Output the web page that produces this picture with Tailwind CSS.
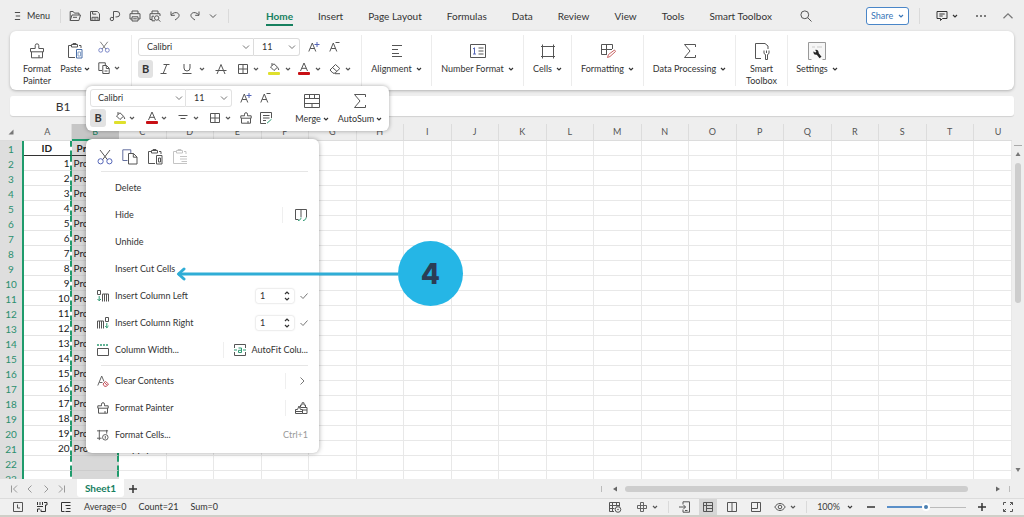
<!DOCTYPE html>
<html lang="en">
<head>
<meta charset="utf-8">
<title>Spreadsheet</title>
<script src="https://cdn.jsdelivr.net/npm/@tailwindcss/browser@4"></script>
</head>
<body class="relative flex h-screen flex-col overflow-hidden bg-[#eeeeee] font-[Lato,'Noto_Sans',sans-serif] text-[9px] leading-3 text-[#333]">

<svg class="hidden" aria-hidden="true">
  <defs>
    <symbol id="chev" viewBox="0 0 8 8"><path d="M1 2.5 4 5.5 7 2.5" fill="none" stroke="currentColor"/></symbol>
    <symbol id="chev-s" viewBox="0 0 6 6"><path d="M1 2 3 4 5 2" fill="none" stroke="currentColor" stroke-width="1.2"/></symbol>
    <symbol id="menu" viewBox="0 0 8 12"><path d="M1 2h6M2 6h5M1 10h6" fill="none" stroke="currentColor"/></symbol>
    <symbol id="open" viewBox="0 0 12 12"><path d="M1.2 10.5V1.5h3l1.2 1.6h4.6v2M1.2 10.5 3 5h8.5l-1.6 5.5zM4 7.3h4" fill="none" stroke="currentColor"/></symbol>
    <symbol id="save" viewBox="0 0 12 12"><path d="M1.5 1.5h6.8l2.2 2.2v6.8h-9zM3.6 1.5v2.6h3.6M3 10.500V7.300h6v3.200M4.500 9h3" fill="none" stroke="currentColor"/></symbol>
    <symbol id="share-p" viewBox="0 0 12 12"><path d="M4.500 9V1.500h3.500a2.700 2.700 0 0 1 0 5.400H6.500" fill="none" stroke="currentColor"/><circle cx="2.900" cy="9" r="1.700" fill="none" stroke="currentColor"/></symbol>
    <symbol id="print" viewBox="0 0 12 12"><path d="M3 3.700V1h6v2.700M3 9H1V3.700h10V9H9M3 6.800h6V11H3zM4.200 8.800h3.600" fill="none" stroke="currentColor"/></symbol>
    <symbol id="preview" viewBox="0 0 12 12"><path d="M3 3.700V1h6v2.700M3 9.500H1V3.700h10V6M3 6.200v4.600h3M3 6.200h2" fill="none" stroke="currentColor"/><circle cx="7.700" cy="8" r="2.200" fill="none" stroke="currentColor"/><path d="m9.300 9.600 2 2" stroke="currentColor"/></symbol>
    <symbol id="undo" viewBox="0 0 12 12"><path d="M2 1.500v3.800h3.800M2.200 5C4 2.600 7 1.900 8.900 3.200c2 1.500 1.300 3.800-.8 5.300L6 10" fill="none" stroke="currentColor"/></symbol>
    <symbol id="redo" viewBox="0 0 12 12"><path d="M10 1.500v3.800H6.200M9.800 5C8 2.600 5 1.900 3.100 3.200c-2 1.500-1.300 3.800.8 5.300L6 10" fill="none" stroke="currentColor"/></symbol>
    <symbol id="search" viewBox="0 0 12 12"><circle cx="4.800" cy="4.800" r="3.900" fill="none" stroke="currentColor"/><path d="M7.700 7.700 11.500 11.500" stroke="currentColor"/></symbol>
    <symbol id="comment" viewBox="0 0 12 12"><path d="M1 1.500h10v7H6.500L4.500 10.500v-2H1zM3.300 4h5.400M3.300 6h3.400" fill="none" stroke="currentColor"/></symbol>
    <symbol id="painter" viewBox="0 0 16 16"><path d="M1.500 5.500h4.700V2.600a1.800 1.800 0 0 1 3.600 0v2.900h4.700v3.300h-13zM2.500 8.800v6h11v-6M10 12v2.800" fill="none" stroke="currentColor"/></symbol>
    <symbol id="painter-s" viewBox="0 0 12 12"><path d="M.8 3.800h3.700V2.200a1.500 1.500 0 0 1 3 0v1.600h3.700v2.400H.8zM1.500 6.200v5h9v-5M8 9v2.200" fill="none" stroke="currentColor"/></symbol>
    <symbol id="paste" viewBox="0 0 16 16"><path d="M4 2.500H1.500v12H8M12 2.500h2V5M4.500 1.500h6v2.500h-6zM6 1.500V.5h3v1" fill="none" stroke="currentColor"/><path d="M9.500 6.500h5.500v8.500H9.500z" fill="none" stroke="#4a6fa8"/><path d="M11 9h2.500v4H11z" fill="none" stroke="#8ba4c8"/></symbol>
    <symbol id="paste-m" viewBox="0 0 16 16"><path d="M4 2.500H1.500v12H8M12 2.500h2V5M4.500 1.500h6v2.500h-6zM6 1.500V.5h3v1M9.500 6.500h5.500v8.500H9.500zM11.500 9h2v4h-2z" fill="none" stroke="currentColor"/></symbol>
    <symbol id="paste-off" viewBox="0 0 16 16"><path d="M4 2.500H1.500v12H8M12 2.500h2V5M4.500 1.500h6v2.500h-6zM6 1.500V.5h3v1M8 7.500h7M8 10h7M9.500 12.500H15M8 14.500h7" fill="none" stroke="currentColor"/></symbol>
    <symbol id="cut" viewBox="0 0 16 16"><path d="M3 1 10.500 10.800M13 1 5.500 10.800" fill="none" stroke="#555"/><circle cx="3.600" cy="12.300" r="2.600" fill="none" stroke="#5566b8"/><circle cx="12.400" cy="12.300" r="2.600" fill="none" stroke="#5566b8"/></symbol>
    <symbol id="copy" viewBox="0 0 16 16"><path d="M5.500 11.500H.8V.8h8V4" fill="none" stroke="#6470a0"/><path d="M6.500 4.500h5l3.500 3.500v7H6.500zM11.300 4.500V8.200H15" fill="none" stroke="currentColor"/></symbol>
    <symbol id="copy-s" viewBox="0 0 12 12"><path d="M4 8.500H.8V.8h6.500V3M4.800 3.500h3.700l2.700 2.700v5.300H4.800zM8.300 3.500v3H11M6.500 9h3" fill="none" stroke="currentColor"/></symbol>
    <symbol id="strike" viewBox="0 0 12 12"><path d="M2 11 6 1.500 10 11M.5 7.500h11" fill="none" stroke="currentColor"/></symbol>
    <symbol id="italic" viewBox="0 0 12 12"><path d="M4.500 1.500h6M1.500 10.500h6M7.800 1.500 4.200 10.500" fill="none" stroke="currentColor"/></symbol>
    <symbol id="under" viewBox="0 0 12 12"><path d="M3 1v4a3 3 0 0 0 6 0V1M1.500 10.500h9" fill="none" stroke="currentColor"/></symbol>
    <symbol id="border" viewBox="0 0 12 12"><path d="M1.500 1.500h9v9h-9zM6 1.500v9M1.500 6h9" fill="none" stroke="currentColor"/></symbol>
    <symbol id="fill" viewBox="0 0 14 14"><path d="M3.500 5 7 1.800 10.500 5.200 7 8.500zM5 3.500V1M10.800 5.500 11.800 8" fill="none" stroke="#555"/><rect x="1" y="10" width="12" height="3" rx="1" fill="#dfe02c"/></symbol>
    <symbol id="color" viewBox="0 0 14 14"><path d="M3.500 9 7 1 10.500 9M4.800 6.300h4.400" fill="none" stroke="#555"/><rect x="1" y="10" width="12" height="3" rx="1" fill="#c80f14"/></symbol>
    <symbol id="a-up" viewBox="0 0 12 12"><path d="M.8 10.500 4.300 2 7.800 10.500M2.200 7.500h4.200" fill="none" stroke="#555"/><path d="M9 1v5M6.500 3.500h5" stroke="#5566b8"/></symbol>
    <symbol id="a-dn" viewBox="0 0 12 12"><path d="M.8 10.500 4.300 2 7.800 10.500M2.200 7.500h4.200" fill="none" stroke="#555"/><path d="M6.500 1.500h4" stroke="#555"/></symbol>
    <symbol id="erase" viewBox="0 0 12 12"><path d="M1 7 6.500 1.500 10.800 5.500 6 10.200H4zM3.500 4.500 8 8.500M6 10.700h5" fill="none" stroke="currentColor"/></symbol>
    <symbol id="align" viewBox="0 0 16 16"><path d="M3 2.500h10M3 6.500h6M3 10.500h7M3 13.500h10" fill="none" stroke="currentColor"/></symbol>
    <symbol id="valign" viewBox="0 0 12 12"><path d="M1.500 3.500h9M3.500 6.500h5" fill="none" stroke="currentColor"/></symbol>
    <symbol id="numfmt" viewBox="0 0 16 16"><path d="M.5 1.500h15v13H.5zM8.500 5h5M8.500 8h5M8.500 11h5" fill="none" stroke="currentColor"/><path d="M3 6l1.500-1.200V11M3 11h3" fill="none" stroke="#5566b8"/></symbol>
    <symbol id="cells" viewBox="0 0 16 16"><path d="M1 3.500h14M1 13.500h14M2.500 1.500v14M13.500 1.500v14" fill="none" stroke="currentColor"/></symbol>
    <symbol id="fmt" viewBox="0 0 16 16"><path d="M12.500 6V1.500h-11v10H7M6.500 1.500v10M1.500 6.500H12" fill="none" stroke="currentColor"/><path d="m7.500 14.500 1-3 6-4.500 1 1.500-5.500 5z" fill="#fff" stroke="#c86464"/></symbol>
    <symbol id="sigma" viewBox="0 0 16 16"><path d="M13.500 4V1.500H2.500L8 8l-5.500 6.500h11V12" fill="none" stroke="currentColor"/></symbol>
    <symbol id="smart" viewBox="0 0 16 18"><path d="M7 16.500H1.500v-15H11L14 4v3" fill="none" stroke="currentColor"/><path d="M10 8.500v3l1.500 1v5h2v-5l1.500-1v-3M12.500 8.500V11" fill="none" stroke="currentColor"/></symbol>
    <symbol id="setting" viewBox="0 0 18 18"><path d="M3.500 17.500h-3V.5h17v17h-3" fill="#f6f6f6" stroke="#999"/><path d="M4 5h3M9 5h5" stroke="#ccc"/><path d="M9 11 12.500 15.500" stroke="#222" stroke-width="2.500"/><circle cx="8" cy="10.200" r="2.500" fill="#222"/><path d="M5 7.500 7.800 10" stroke="#f6f6f6" stroke-width="1.800"/></symbol>
    <symbol id="merge" viewBox="0 0 16 16"><path d="M.5 1.500h15v13H.5zM.5 5.500h15M.5 10.500h15M5.500 1.500v4M10.500 1.500v4M8 10.500v4" fill="none" stroke="currentColor"/></symbol>
    <symbol id="style" viewBox="0 0 12 12"><path d="M11.500 6V.5H.5v11H6M3 3.500h6.500M3 6h6.500M3 8.500h3" fill="none" stroke="currentColor"/><path d="m7 11.200 4.500-4" stroke="#2f9a73"/></symbol>
    <symbol id="hidecol" viewBox="0 0 12 14"><path d="M3.500 11.500H.5v-10h11v8M6 1.500V9" fill="none" stroke="currentColor"/><path d="M3 12.500c1.500 0 3-1 3-3M8 12.500c1.500 0 3-1 3-3" fill="none" stroke="#2f9a73"/></symbol>
    <symbol id="insl" viewBox="0 0 12 12"><path d="M.5.500h3v4h-3zM5.500 11.500V4h6v7.500M7.500 4v7.500M9.500 4v7.500" fill="none" stroke="currentColor"/><path d="M2.200 6v5M.5 9l1.700 1.700L4 9" fill="none" stroke="#2f9a73"/></symbol>
    <symbol id="insr" viewBox="0 0 12 12"><path d="M8.500.500h3v4h-3zM.5 11.500V4h6v7.500M2.500 4v7.500M4.500 4v7.500" fill="none" stroke="currentColor"/><path d="M9.800 6v5M8.200 9l1.600 1.700L11.500 9" fill="none" stroke="#2f9a73"/></symbol>
    <symbol id="colw" viewBox="0 0 12 12"><path d="M0 1h12" stroke="#2f9a73" stroke-width="1.500" stroke-dasharray="2 1"/><path d="M.5 4.500h11v7H.5z" fill="none" stroke="currentColor"/></symbol>
    <symbol id="autofit" viewBox="0 0 12 12"><path d="M.5 4V.5h11V4M.5 8v3.500h11V8" fill="none" stroke="currentColor"/><path d="M0 6h3M9 6h3" stroke="#2f9a73"/><path d="M4.500 4h3v4.500h-3V6.300h3" fill="none" stroke="#2f9a73"/></symbol>
    <symbol id="clear" viewBox="0 0 12 12"><path d="M.8 10.500 4.700 1 7 6.500M2.300 7.500h3.200" fill="none" stroke="#666"/><path d="M6 9 8.500 6.500 11.500 9 9.500 11.300H7.500zM7.500 7.500l2.500 2.700" fill="none" stroke="#c4505a"/></symbol>
    <symbol id="painters" viewBox="0 0 13 12"><path d="M.5 7.500h2L4 4l1.500 3.500h2v4h-7zM.5 9.500h7M5.500 5.500V3H7V.8h2V3h1.500v2.500M5.500 5.500h6.500v6H7.500M12 8H7.500" fill="none" stroke="currentColor"/></symbol>
    <symbol id="fcells" viewBox="0 0 13 12"><path d="M0 1.500h12M2.500.500v11M10.500.500v4M0 9.500h5" fill="none" stroke="currentColor"/><circle cx="9" cy="8.500" r="3" fill="none" stroke="currentColor"/><path d="M9 7v3" stroke="currentColor"/></symbol>
    <symbol id="tick" viewBox="0 0 8 8"><path d="M.5 4 3 6.500 7.500 1.500" fill="none" stroke="currentColor"/></symbol>
    <symbol id="up" viewBox="0 0 8 8"><path d="M1 5.500 4 2.500 7 5.500" fill="none" stroke="currentColor" stroke-width=".8"/></symbol>
    <symbol id="right" viewBox="0 0 8 8"><path d="M2.500.500 6 4 2.500 7.500" fill="none" stroke="currentColor"/></symbol>
    <symbol id="left" viewBox="0 0 8 8"><path d="M5.500.500 2 4 5.500 7.500" fill="none" stroke="currentColor"/></symbol>
    <symbol id="first" viewBox="0 0 8 8"><path d="M1.500 .500v7M7 .500 3.500 4 7 7.500" fill="none" stroke="currentColor"/></symbol>
    <symbol id="last" viewBox="0 0 8 8"><path d="M6.500 .500v7M1 .500 4.500 4 1 7.500" fill="none" stroke="currentColor"/></symbol>
    <symbol id="plus" viewBox="0 0 8 8"><path d="M4 0v8M0 4h8" stroke="currentColor" stroke-width="1.500"/></symbol>
    <symbol id="minus" viewBox="0 0 8 8"><path d="M0 4h8" stroke="currentColor" stroke-width="1.500"/></symbol>
    <symbol id="clock" viewBox="0 0 12 12"><path d="M1.500 1.500h9v9h-9zM5.500 3.500V7H8" fill="none" stroke="currentColor"/></symbol>
    <symbol id="macro" viewBox="0 0 12 12"><path d="M1.500 1v3M4 1v3M6.500 1v3M1 5.500h6M8 1.500h3v2.500H9.500v6.500H5V8.500M1.500 8v3M1.500 8H4" fill="none" stroke="currentColor"/></symbol>
    <symbol id="outline" viewBox="0 0 12 12"><path d="M4.500 10.500h-3v-9h9M5.500 4.500h5M6.500 7.500h4M5.500 10.500h5" fill="none" stroke="currentColor"/></symbol>
    <symbol id="tbl" viewBox="0 0 14 12"><path d="M6 10.500H1.500v-9h10v4M1.500 4.500h10M1.500 7.500h5M4.500 1.500v9M8.500 1.500v4" fill="none" stroke="currentColor"/><circle cx="10" cy="8.500" r="2.800" fill="none" stroke="currentColor"/><circle cx="10" cy="8.500" r=".8" fill="currentColor"/></symbol>
    <symbol id="move" viewBox="0 0 12 12"><path d="M4.500 1.500h3v3h3v3h-3v3h-3v-3h-3v-3h3zM4.500 4.500h3v3h-3z" fill="none" stroke="currentColor" stroke-width=".9"/></symbol>
    <symbol id="device" viewBox="0 0 12 12"><path d="M4 3.500V.8h6.500v10.400H4V8.500M0 6h6.500M4.500 4l2 2-2 2M6 9.500h2.500" fill="none" stroke="currentColor"/></symbol>
    <symbol id="normal" viewBox="0 0 12 12"><path d="M1.500 1.500h9v9h-9zM4.500 1.500v9M1.500 4.500h9M4.500 7.500h6" fill="none" stroke="currentColor"/></symbol>
    <symbol id="page" viewBox="0 0 12 12"><path d="M1.500 1.500h9v9h-9zM6 1.500v9" fill="none" stroke="currentColor"/></symbol>
    <symbol id="pagebreak" viewBox="0 0 12 12"><path d="M1.500 1.500h9v9h-9zM1.500 7.500h6v-6" fill="none" stroke="currentColor"/></symbol>
    <symbol id="eye" viewBox="0 0 12 12"><path d="M.8 6C3.500 1.300 8.500 1.300 11.200 6 8.500 10.700 3.500 10.700.8 6z" fill="none" stroke="currentColor"/><circle cx="6" cy="6" r="1.800" fill="none" stroke="currentColor"/></symbol>
    <symbol id="full" viewBox="0 0 12 12"><path d="M1.500 4V1.500H4M8 1.500h2.500V4M10.500 8v2.500H8M4 10.500H1.500V8M10.500 1.500 8 4M1.500 10.500 4 8" fill="none" stroke="currentColor"/></symbol>
  </defs>
</svg>

<!-- Title bar with quick access and ribbon tabs -->
<header class="flex h-[31px] shrink-0 items-center pt-px pr-2.5 pl-[14px]">
  <button class="flex w-9 items-center gap-1.5"><svg class="h-3 w-2"><use href="#menu"/></svg>Menu</button>
  <span class="mr-2 ml-2.5 h-3.5 w-px bg-[#dadada]"></span>
  <div class="flex items-center gap-2 text-[#555]">
    <button aria-label="Open"><svg class="size-3"><use href="#open"/></svg></button>
    <button aria-label="Save"><svg class="size-3"><use href="#save"/></svg></button>
    <button aria-label="Export PDF"><svg class="size-3"><use href="#share-p"/></svg></button>
    <button aria-label="Print"><svg class="size-3"><use href="#print"/></svg></button>
    <button aria-label="Preview"><svg class="size-3"><use href="#preview"/></svg></button>
    <button aria-label="Undo"><svg class="size-3"><use href="#undo"/></svg></button>
    <button aria-label="Redo"><svg class="size-3"><use href="#redo"/></svg></button>
    <button aria-label="More"><svg class="size-2"><use href="#chev"/></svg></button>
  </div>
  <span class="ml-[11px] h-3.5 w-px bg-[#dadada]"></span>
  <nav class="ml-[37px] flex items-center gap-[25px] pt-1 text-[10px]">
    <a href="#" class="border-b-2 border-[#16805f] pb-0.5 font-bold text-[#16805f]">Home</a>
    <a href="#" class="pb-1">Insert</a>
    <a href="#" class="pb-1">Page Layout</a>
    <a href="#" class="pb-1">Formulas</a>
    <a href="#" class="pb-1">Data</a>
    <a href="#" class="pb-1">Review</a>
    <a href="#" class="pb-1">View</a>
    <a href="#" class="pb-1">Tools</a>
    <a href="#" class="pb-1">Smart Toolbox</a>
  </nav>
  <button aria-label="Search" class="ml-7 text-[#555]"><svg class="size-3"><use href="#search"/></svg></button>
  <button class="ml-auto flex h-[18px] w-[43px] items-center justify-between rounded-[3px] border border-[#4a86c8] bg-white px-1 text-[#3a76b8]">Share<svg class="size-1.5"><use href="#chev-s"/></svg></button>
  <span class="ml-2.5 h-4 w-px bg-[#dadada]"></span>
  <button aria-label="Comments" class="ml-4 flex items-center gap-1"><svg class="size-3"><use href="#comment"/></svg><svg class="size-1.5"><use href="#chev-s"/></svg></button>
  <button aria-label="More options" class="ml-[18px] flex gap-0.5"><i class="size-0.5 rounded-full bg-[#555]"></i><i class="size-0.5 rounded-full bg-[#555]"></i><i class="size-0.5 rounded-full bg-[#555]"></i></button>
  <button aria-label="Collapse ribbon" class="ml-4 text-[#777]"><svg class="size-3"><use href="#up"/></svg></button>
</header>

<!-- Ribbon -->
<section class="mx-2.5 flex h-[59px] shrink-0 items-stretch rounded-md bg-white py-1 shadow-[0_1px_3px_rgba(0,0,0,0.25)]">
  <div class="flex w-[122px] border-r border-[#ececec] pl-[11px]">
    <button class="flex w-8 flex-col items-center pt-2"><svg class="size-4 shrink-0 text-[#555]"><use href="#painter"/></svg><span class="mt-1 leading-3">Format<br>Painter</span></button>
    <button class="ml-1.5 flex w-8 flex-col items-center pt-2"><svg class="size-4 shrink-0 text-[#555]"><use href="#paste"/></svg><span class="mt-1 flex items-center gap-0.5">Paste<svg class="size-1.5"><use href="#chev-s"/></svg></span></button>
    <div class="ml-[7px] flex flex-col justify-between pt-1.5 pb-3">
      <button aria-label="Cut"><svg class="size-3"><use href="#cut"/></svg></button>
      <button aria-label="Copy" class="flex items-center gap-1 text-[#555]"><svg class="size-3"><use href="#copy-s"/></svg><svg class="size-1.5"><use href="#chev-s"/></svg></button>
    </div>
  </div>
  <div class="flex w-[230px] flex-col justify-between border-r border-[#ececec] pt-[3px] pr-2.5 pb-2 pl-1.5">
    <div class="flex items-center">
      <div class="relative"><select aria-label="Font" class="h-[18px] w-[116px] appearance-none rounded-l-[3px] border border-[#dcdcdc] bg-white pl-2"><option>Calibri</option></select><svg class="pointer-events-none absolute top-[5px] right-1 size-2 text-[#777]"><use href="#chev"/></svg></div>
      <div class="relative"><select aria-label="Font size" class="h-[18px] w-[46px] appearance-none rounded-r-[3px] border border-l-0 border-[#dcdcdc] bg-white pl-2"><option>11</option></select><svg class="pointer-events-none absolute top-[5px] right-1 size-2 text-[#777]"><use href="#chev"/></svg></div>
      <button aria-label="Grow font" class="ml-2"><svg class="size-3"><use href="#a-up"/></svg></button>
      <button aria-label="Shrink font" class="ml-[9px]"><svg class="size-3"><use href="#a-dn"/></svg></button>
    </div>
    <div class="flex items-center text-[#555]">
      <button class="h-[18px] w-[18px] rounded-[3px] bg-[#e2e2e2] text-[11px] font-bold text-[#333]">B</button>
      <button aria-label="Italic" class="ml-1.5"><svg class="size-3"><use href="#italic"/></svg></button>
      <button aria-label="Underline" class="ml-2.5 flex items-center gap-1.5"><svg class="size-3"><use href="#under"/></svg><svg class="size-1.5"><use href="#chev-s"/></svg></button>
      <button aria-label="Strikethrough" class="ml-2.5"><svg class="size-3"><use href="#strike"/></svg></button>
      <button aria-label="Borders" class="ml-2.5 flex items-center gap-1"><svg class="size-3"><use href="#border"/></svg><svg class="size-1.5"><use href="#chev-s"/></svg></button>
      <button aria-label="Fill color" class="ml-2 flex items-center gap-1"><svg class="size-3.5"><use href="#fill"/></svg><svg class="size-1.5"><use href="#chev-s"/></svg></button>
      <button aria-label="Font color" class="ml-1.5 flex items-center gap-1"><svg class="size-3.5"><use href="#color"/></svg><svg class="size-1.5"><use href="#chev-s"/></svg></button>
      <button aria-label="Clear format" class="ml-2 flex items-center gap-1"><svg class="size-3"><use href="#erase"/></svg><svg class="size-1.5"><use href="#chev-s"/></svg></button>
    </div>
  </div>
  <button class="flex w-[70px] flex-col items-center border-r border-[#ececec] pt-2"><svg class="size-4 text-[#555]"><use href="#align"/></svg><span class="mt-1 flex items-center gap-1">Alignment<svg class="size-1.5"><use href="#chev-s"/></svg></span></button>
  <button class="flex w-[92px] flex-col items-center border-r border-[#ececec] pt-2"><svg class="size-4 text-[#555]"><use href="#numfmt"/></svg><span class="mt-1 flex items-center gap-1">Number Format<svg class="size-1.5"><use href="#chev-s"/></svg></span></button>
  <button class="flex w-12 flex-col items-center border-r border-[#ececec] pt-2"><svg class="size-4 text-[#555]"><use href="#cells"/></svg><span class="mt-1 flex items-center gap-1">Cells<svg class="size-1.5"><use href="#chev-s"/></svg></span></button>
  <button class="flex w-[72px] flex-col items-center border-r border-[#ececec] pt-2"><svg class="size-4 text-[#555]"><use href="#fmt"/></svg><span class="mt-1 flex items-center gap-1">Formatting<svg class="size-1.5"><use href="#chev-s"/></svg></span></button>
  <button class="flex w-[92px] flex-col items-center border-r border-[#ececec] pt-2"><svg class="size-4 text-[#555]"><use href="#sigma"/></svg><span class="mt-1 flex items-center gap-1">Data Processing<svg class="size-1.5"><use href="#chev-s"/></svg></span></button>
  <button class="flex w-[52px] flex-col items-center border-r border-[#ececec] pt-[7px]"><svg class="h-[18px] w-4 shrink-0 text-[#555]"><use href="#smart"/></svg><span class="mt-[3px]">Smart<br>Toolbox</span></button>
  <button class="flex w-[58px] flex-col items-center pt-[7px]"><svg class="size-[18px]"><use href="#setting"/></svg><span class="mt-[3px] flex items-center gap-1">Settings<svg class="size-1.5"><use href="#chev-s"/></svg></span></button>
</section>

<!-- Name box and formula bar -->
<div class="mx-2.5 mt-1.5 flex h-5 shrink-0 rounded-[3px] bg-white shadow-[0_1px_1px_rgba(0,0,0,0.12)]">
  <input aria-label="Name box" value="B1" class="w-[106px] bg-transparent text-center text-[12px]">
  <input aria-label="Formula" class="min-w-0 flex-1 border-l border-[#e4e4e4] bg-transparent">
</div>

<!-- Sheet -->
<main class="mt-2 flex min-h-0 flex-1">
  <div class="min-w-0 flex-1 overflow-hidden">
    <table class="w-full table-fixed border-separate border-spacing-0 text-[10px] leading-[14px] text-[#222]">
      <colgroup id="cols"><col class="w-6"></colgroup>
      <thead><tr id="heads"></tr></thead>
      <tbody id="rows"></tbody>
    </table>
  </div>
  <div class="flex w-3 flex-col items-center bg-[#eeeeee] pt-[21px]">
    <svg class="h-3 w-2 shrink-0"><path d="M0 .500h8" stroke="#aaa"/><path d="M4 7 6.500 11h-5z" fill="#777"/></svg>
    <div class="mt-1.5 h-[140px] w-1.5 rounded-full bg-[#cdcdcd]"></div>
    <svg class="mt-auto mb-1.5 h-1.5 w-2 shrink-0"><path d="M1.500 1h5L4 5z" fill="#777"/></svg>
  </div>
</main>

<!-- Sheet tabs and horizontal scrollbar -->
<div class="flex h-[19px] shrink-0 items-center pl-2.5 text-[#999]">
  <div class="flex gap-2">
    <button aria-label="First sheet"><svg class="size-2"><use href="#first"/></svg></button>
    <button aria-label="Previous sheet"><svg class="size-2"><use href="#left"/></svg></button>
    <button aria-label="Next sheet"><svg class="size-2"><use href="#right"/></svg></button>
    <button aria-label="Last sheet"><svg class="size-2"><use href="#last"/></svg></button>
  </div>
  <button class="ml-[11px] h-[18px] w-[47px] self-start rounded-b-[3px] bg-white text-[10px] font-bold text-[#16805f]">Sheet1</button>
  <button aria-label="Add sheet" class="ml-[5px] text-[#333]"><svg class="size-2"><use href="#plus"/></svg></button>
  <div class="ml-auto flex w-[423px] items-center pr-3.5">
    <span class="h-1.5 w-px bg-[#bbb]"></span>
    <svg class="ml-2.5 size-1.5"><path d="M5 .500v5L1 3z" fill="#666"/></svg>
    <div class="ml-[7px] h-1.5 w-[343px] rounded-full bg-[#cdcdcd]"></div>
    <svg class="ml-auto size-1.5"><path d="M1 .500v5L5 3z" fill="#666"/></svg>
    <span class="ml-2 h-1.5 w-px bg-[#bbb]"></span>
  </div>
</div>

<!-- Status bar -->
<footer class="flex h-[19px] shrink-0 items-center border-t border-b-2 border-t-[#dcdcdc] border-b-[#cfcfc8] bg-[#f0f0f0] pr-2.5 pl-3">
  <svg class="size-3 text-[#555]"><use href="#clock"/></svg>
  <svg class="ml-3 size-3"><use href="#macro"/></svg>
  <svg class="ml-3 size-3"><use href="#outline"/></svg>
  <span class="ml-3">Average=0</span><span class="ml-3">Count=21</span><span class="ml-3">Sum=0</span>
  <div class="ml-auto flex items-center text-[#555]">
    <button aria-label="Table tools"><svg class="h-3 w-3.5"><use href="#tbl"/></svg></button>
    <button aria-label="Crosshair" class="ml-3.5 flex items-center gap-1"><svg class="size-3"><use href="#move"/></svg><svg class="size-1.5"><use href="#chev-s"/></svg></button>
    <span class="ml-2.5 h-3 w-px bg-[#dadada]"></span>
    <button aria-label="Send to device" class="ml-2.5"><svg class="size-3"><use href="#device"/></svg></button>
    <button aria-label="Normal view" class="ml-2 flex h-4 w-[18px] items-center justify-center bg-[#d6d6d6]"><svg class="size-3"><use href="#normal"/></svg></button>
    <button aria-label="Page layout" class="ml-[9px]"><svg class="size-3"><use href="#page"/></svg></button>
    <button aria-label="Page break" class="ml-3"><svg class="size-3"><use href="#pagebreak"/></svg></button>
    <button aria-label="Reading view" class="ml-3 flex items-center gap-1"><svg class="size-3"><use href="#eye"/></svg><svg class="size-1.5"><use href="#chev-s"/></svg></button>
    <span class="ml-2.5 h-3 w-px bg-[#dadada]"></span>
    <button class="ml-2.5 flex items-center gap-[7px] text-[#3c3c3c]">100%<svg class="size-1.5"><use href="#chev-s"/></svg></button>
    <button aria-label="Zoom out" class="ml-3.5 text-[#333]"><svg class="size-2"><use href="#minus"/></svg></button>
    <div class="relative ml-3 flex h-2 w-[79px] items-center">
      <span class="h-0.5 w-[37px] bg-[#5a8fc8]"></span><span class="h-px flex-1 bg-[#bbb]"></span>
      <input type="range" aria-label="Zoom" class="absolute inset-0 h-full w-full opacity-0">
      <i class="pointer-events-none absolute top-0.5 left-[37px] size-1 rounded-full bg-[#4a7fb0] ring-2 ring-white"></i>
    </div>
    <button aria-label="Zoom in" class="ml-3 text-[#333]"><svg class="size-2"><use href="#plus"/></svg></button>
    <button aria-label="Full screen" class="ml-4"><svg class="size-3"><use href="#full"/></svg></button>
  </div>
</footer>

<!-- Floating mini toolbar -->
<div class="absolute top-[86px] left-[86px] flex h-[45px] w-[303px] rounded-md bg-white pt-[3px] pl-1 shadow-[0_0_4px_rgba(0,0,0,0.35)]">
  <div class="w-[186px]">
    <div class="flex items-center">
      <div class="relative"><select aria-label="Font" class="h-[18px] w-24 appearance-none rounded-l-[3px] border border-[#e2e2e2] bg-white pl-[7px]"><option>Calibri</option></select><svg class="pointer-events-none absolute top-[5px] right-[3px] size-2 text-[#777]"><use href="#chev"/></svg></div>
      <div class="relative"><select aria-label="Font size" class="h-[18px] w-[46px] appearance-none rounded-r-[3px] border border-l-0 border-[#e2e2e2] bg-white pl-2"><option>11</option></select><svg class="pointer-events-none absolute top-[5px] right-1 size-2 text-[#777]"><use href="#chev"/></svg></div>
      <button aria-label="Grow font" class="ml-2"><svg class="size-3"><use href="#a-up"/></svg></button>
      <button aria-label="Shrink font" class="ml-2"><svg class="size-3"><use href="#a-dn"/></svg></button>
    </div>
    <div class="mt-0.5 flex items-center text-[#555]">
      <button class="h-[18px] w-4 rounded-[3px] bg-[#e2e2e2] text-[11px] font-bold text-[#333]">B</button>
      <button aria-label="Fill color" class="ml-[7px] flex items-center gap-0.5"><svg class="size-3.5"><use href="#fill"/></svg><svg class="size-1.5"><use href="#chev-s"/></svg></button>
      <button aria-label="Font color" class="ml-2.5 flex items-center gap-0.5"><svg class="size-3.5"><use href="#color"/></svg><svg class="size-1.5"><use href="#chev-s"/></svg></button>
      <button aria-label="Vertical align" class="ml-2.5 flex items-center gap-1"><svg class="size-3"><use href="#valign"/></svg><svg class="size-1.5"><use href="#chev-s"/></svg></button>
      <button aria-label="Borders" class="ml-2.5 flex items-center gap-1"><svg class="size-3"><use href="#border"/></svg><svg class="size-1.5"><use href="#chev-s"/></svg></button>
      <button aria-label="Format painter" class="ml-[9px]"><svg class="size-3"><use href="#painter-s"/></svg></button>
      <button aria-label="Styles" class="ml-2"><svg class="size-3"><use href="#style"/></svg></button>
    </div>
  </div>
  <button class="ml-[18px] flex w-9 flex-col items-center pt-1"><svg class="size-4 text-[#555]"><use href="#merge"/></svg><span class="mt-1 flex items-center gap-0.5">Merge<svg class="size-1.5"><use href="#chev-s"/></svg></span></button>
  <button class="ml-2 flex w-11 flex-col items-center pt-1"><svg class="size-4 text-[#555]"><use href="#sigma"/></svg><span class="mt-1 flex items-center gap-0.5">AutoSum<svg class="size-1.5"><use href="#chev-s"/></svg></span></button>
</div>

<!-- Column context menu -->
<div role="menu" class="absolute top-[139px] left-[86px] w-[233px] rounded-md bg-white px-[11px] pb-[5px] shadow-[0_0_5px_rgba(0,0,0,0.35)]">
  <div class="flex h-8 items-center gap-[9px] pt-1 text-[#555]">
    <button aria-label="Cut"><svg class="size-4"><use href="#cut"/></svg></button>
    <button aria-label="Copy"><svg class="size-4"><use href="#copy"/></svg></button>
    <button aria-label="Paste"><svg class="size-4"><use href="#paste-m"/></svg></button>
    <button aria-label="Paste special" class="text-[#c4c4c4]"><svg class="size-4"><use href="#paste-off"/></svg></button>
  </div>
  <hr class="mb-0.5 ml-1 border-[#e6e6e6]">
  <button role="menuitem" class="flex h-[27px] w-full items-center pl-[18px]">Delete</button>
  <button role="menuitem" class="flex h-[27px] w-full items-center pl-[18px]">Hide<span class="mr-2 ml-auto h-4 w-px bg-[#efefef]"></span><svg class="mr-px ml-1 h-3.5 w-3 text-[#555]"><use href="#hidecol"/></svg></button>
  <button role="menuitem" class="flex h-[27px] w-full items-center pl-[18px]">Unhide</button>
  <button role="menuitem" class="flex h-[27px] w-full items-center pl-[18px]">Insert Cut Cells</button>
  <div role="menuitem" class="flex h-[27px] items-center"><svg class="mr-1.5 size-3 text-[#555]"><use href="#insl"/></svg><label for="cl">Insert Column Left</label>
    <div class="ml-auto flex h-3.5 w-[38px] items-center justify-between rounded-[2px] px-1 shadow-[0_0_2px_rgba(0,0,0,0.25)]"><input id="cl" value="1" class="w-4 bg-transparent"><div class="flex flex-col"><button aria-label="Increase"><svg class="size-1.5 rotate-180"><use href="#chev-s"/></svg></button><button aria-label="Decrease"><svg class="size-1.5"><use href="#chev-s"/></svg></button></div></div>
    <button aria-label="Apply" class="ml-1.5 text-[#777]"><svg class="size-2"><use href="#tick"/></svg></button></div>
  <div role="menuitem" class="flex h-[27px] items-center"><svg class="mr-1.5 size-3 text-[#555]"><use href="#insr"/></svg><label for="cr">Insert Column Right</label>
    <div class="ml-auto flex h-3.5 w-[38px] items-center justify-between rounded-[2px] px-1 shadow-[0_0_2px_rgba(0,0,0,0.25)]"><input id="cr" value="1" class="w-4 bg-transparent"><div class="flex flex-col"><button aria-label="Increase"><svg class="size-1.5 rotate-180"><use href="#chev-s"/></svg></button><button aria-label="Decrease"><svg class="size-1.5"><use href="#chev-s"/></svg></button></div></div>
    <button aria-label="Apply" class="ml-1.5 text-[#777]"><svg class="size-2"><use href="#tick"/></svg></button></div>
  <div class="flex h-[27px] items-center"><button role="menuitem" class="flex items-center gap-1.5"><svg class="size-3 text-[#555]"><use href="#colw"/></svg>Column Width...</button>
    <span class="mr-2.5 ml-auto h-4 w-px bg-[#efefef]"></span>
    <button role="menuitem" class="flex items-center gap-1.5"><svg class="size-3 text-[#555]"><use href="#autofit"/></svg>AutoFit Colu...</button></div>
  <hr class="mt-0.5 mb-px ml-1 border-[#e6e6e6]">
  <button role="menuitem" class="flex h-[27px] w-full items-center gap-1.5"><svg class="size-3"><use href="#clear"/></svg>Clear Contents<span class="mr-1.5 ml-auto h-4 w-px bg-[#efefef]"></span><svg class="mr-0.5 size-2 text-[#777]"><use href="#right"/></svg></button>
  <button role="menuitem" class="flex h-[27px] w-full items-center gap-1.5"><svg class="size-3 text-[#555]"><use href="#painter-s"/></svg>Format Painter<span class="mr-[3px] ml-auto h-4 w-px bg-[#efefef]"></span><svg class="h-3 w-[13px] text-[#555]"><use href="#painters"/></svg></button>
  <button role="menuitem" class="flex h-[27px] w-full items-center gap-1.5"><svg class="size-3 text-[#555]"><use href="#fcells"/></svg>Format Cells...<span class="ml-auto text-[#999]">Ctrl+1</span></button>
</div>

<!-- Step callout -->
<div class="absolute top-[241px] left-[176px] flex items-center">
  <svg class="h-3.5 w-[222px]" viewBox="0 0 222 14"><path d="M2 7h220" stroke="#2fadd6" stroke-width="3"/><path d="M8 2 2.500 7 8 12" fill="none" stroke="#2fadd6" stroke-width="3" stroke-linecap="round" stroke-linejoin="round"/></svg>
  <div class="flex size-[65px] items-center justify-center rounded-full bg-[#25b6e6] font-['Inter',sans-serif] text-[28px] leading-none font-extrabold text-[#2b3d55]">4</div>
</div>

<script>
  const letters = 'ABCDEFGHIJKLMNOPQRSTU'.split('');
  const cols = document.getElementById('cols');
  letters.forEach((l) => {
    const c = document.createElement('col');
    if (l === 'U') c.className = 'w-[38px]';
    cols.append(c);
  });
  let head = '<th class="h-[17px] border-b border-[#dcdcdc] p-0 pl-2 align-middle"><svg class="size-1.5"><path d="M5.500 .500v5h-5z" fill="#777"/></svg></th>';
  letters.forEach((l) => {
    if (l === 'B') head += '<th class="h-[17px] border-b-2 border-[#1f9b6c] bg-[#c6c6c6] p-0 text-[9px] font-normal text-[#16805f]">B</th>';
    else if (l === 'U') head += '<th class="h-[17px] border-b border-[#dcdcdc] p-0 pl-2.5 text-[9px] font-normal text-[#555]">U</th>';
    else head += '<th class="h-[17px] border-r border-b border-[#dcdcdc] p-0 text-[9px] font-normal text-[#555]">' + l + '</th>';
  });
  document.getElementById('heads').innerHTML = head;
  let body = '';
  for (let r = 1; r <= 23; r++) {
    body += '<tr><th class="h-[15px] border-r-2 border-[#1f9b6c] bg-[#dedede] p-0 text-[10px] font-normal text-[#2b8f6e]">' + r + '</th>';
    letters.forEach((l) => {
      if (l === 'A') {
        body += r === 1
          ? '<td class="h-[15px] border-r-2 border-b border-r-[#1f9b6c] border-b-[#333] bg-white p-0 text-center font-bold [border-right-style:dashed]">ID</td>'
          : '<td class="h-[15px] border-r-2 border-b border-r-[#1f9b6c] border-b-[#e4e4e4] bg-white p-0 text-right [border-right-style:dashed]">' + (r < 22 ? r - 1 : '') + '</td>';
      } else if (l === 'B') {
        body += r === 1
          ? '<td class="h-[15px] overflow-hidden border-r-2 border-b border-r-[#1f9b6c] border-b-[#333] bg-[#d8d8d8] p-0 text-center font-bold [border-right-style:dashed]">Product</td>'
          : '<td class="h-[15px] overflow-hidden border-r-2 border-b border-r-[#1f9b6c] border-b-[#cccccc] bg-[#d8d8d8] p-0 pl-0.5 [border-right-style:dashed]">' + (r < 22 ? 'Product' : '') + '</td>';
      } else {
        body += '<td class="h-[15px] border-r border-b border-[#e8e8e8] bg-white p-0 pl-0.5">' + (l === 'C' && r === 21 ? 'Supply' : '') + '</td>';
      }
    });
    body += '</tr>';
  }
  document.getElementById('rows').innerHTML = body;
</script>
</body>
</html>
